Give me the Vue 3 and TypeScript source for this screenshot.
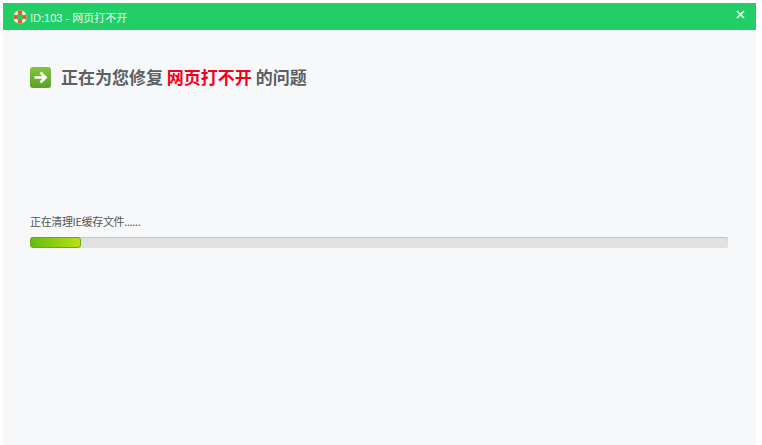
<script setup lang="ts">
const title = "ID:103 - 网页打不开";
const progress = 51;
</script>

<template>
  <div class="page">
    <div class="window">
      <header class="titlebar">
        <svg class="logo" width="16" height="16" viewBox="0 0 16 16">
          <circle cx="8" cy="8" r="5.2" fill="none" stroke="#f3ecd8" stroke-width="3.2" />
          <path d="M5.6 1.5 H10.4 L9.6 5.4 H6.4 Z" fill="#df5a30" />
          <path d="M5.6 14.5 H10.4 L9.6 10.6 H6.4 Z" fill="#df5a30" />
          <path d="M1.5 5.6 L5.4 6.4 V9.6 L1.5 10.4 Z" fill="#df5a30" />
          <path d="M14.5 5.6 L10.6 6.4 V9.6 L14.5 10.4 Z" fill="#df5a30" />
        </svg>
        <span class="title">{{ title }}</span>
        <svg class="close" width="9" height="9" viewBox="0 0 9 9">
          <path d="M1 1 L8 8 M8 1 L1 8" stroke="#fff" stroke-width="1.6" fill="none" />
        </svg>
      </header>
      <main class="content">
        <div class="heading">
          <span class="arrow">
            <svg width="15" height="15" viewBox="0 0 15 15">
              <path d="M1.5 7.5 H11.5 M7.5 2.5 L12.5 7.5 L7.5 12.5" fill="none" stroke="#fff" stroke-width="2.7" />
            </svg>
          </span>
          <h1>正在为您修复 <em>网页打不开</em> 的问题</h1>
        </div>
        <p class="status">正在清理IE缓存文件......</p>
        <div class="track">
          <div class="bar" :style="{ width: progress + 'px' }"></div>
        </div>
      </main>
    </div>
  </div>
</template>

<style>
html, body { margin: 0; background: #fff; }
</style>

<style scoped>
.page {
  width: 762px;
  height: 445px;
  padding: 3px 6px 0 3px;
  box-sizing: border-box;
  overflow: hidden;
  font-family: "Noto Sans CJK SC", "Liberation Sans", sans-serif;
}
.window {
  height: 100%;
  display: flex;
  flex-direction: column;
  background: #f6f8fa;
}
.titlebar {
  height: 27px;
  flex: none;
  display: flex;
  align-items: center;
  background: #22cf67;
  padding: 0 11px 0 9px;
  color: #e8fbef;
}
.logo { flex: none; }
.title {
  margin-left: 2px;
  font-size: 11px;
  font-family: "Liberation Sans", "Noto Sans CJK SC", sans-serif;
}
.close { margin-left: auto; margin-top: -5px; }
.content {
  flex: 1;
  padding: 0 28px 0 27px;
}
.heading {
  display: flex;
  align-items: center;
  margin-top: 36px;
  height: 22px;
}
.arrow {
  width: 21px;
  height: 21px;
  flex: none;
  border-radius: 3px;
  background: linear-gradient(#86c440, #5a9f28);
  display: flex;
  align-items: center;
  justify-content: center;
}
h1 {
  margin: 0 0 0 10px;
  font-size: 17px;
  font-weight: 700;
  color: #5c5f63;
  line-height: 22px;
  white-space: pre;
}
h1 em {
  font-style: normal;
  color: #f5001a;
}
.status {
  margin: 126px 0 0;
  font-size: 11px;
  letter-spacing: -0.35px;
  line-height: 14px;
  color: #555;
}
.track {
  margin-top: 9px;
  height: 11px;
  background: #e1e1e1;
  box-shadow: inset 0 1px #c4c4c4;
  box-sizing: border-box;
  border-radius: 2px;
  overflow: hidden;
}
.bar {
  height: 100%;
  box-sizing: border-box;
  border: 1px solid #6ea814;
  border-radius: 3px;
  background: linear-gradient(90deg, #62bd10, #b9e114);
}
</style>
